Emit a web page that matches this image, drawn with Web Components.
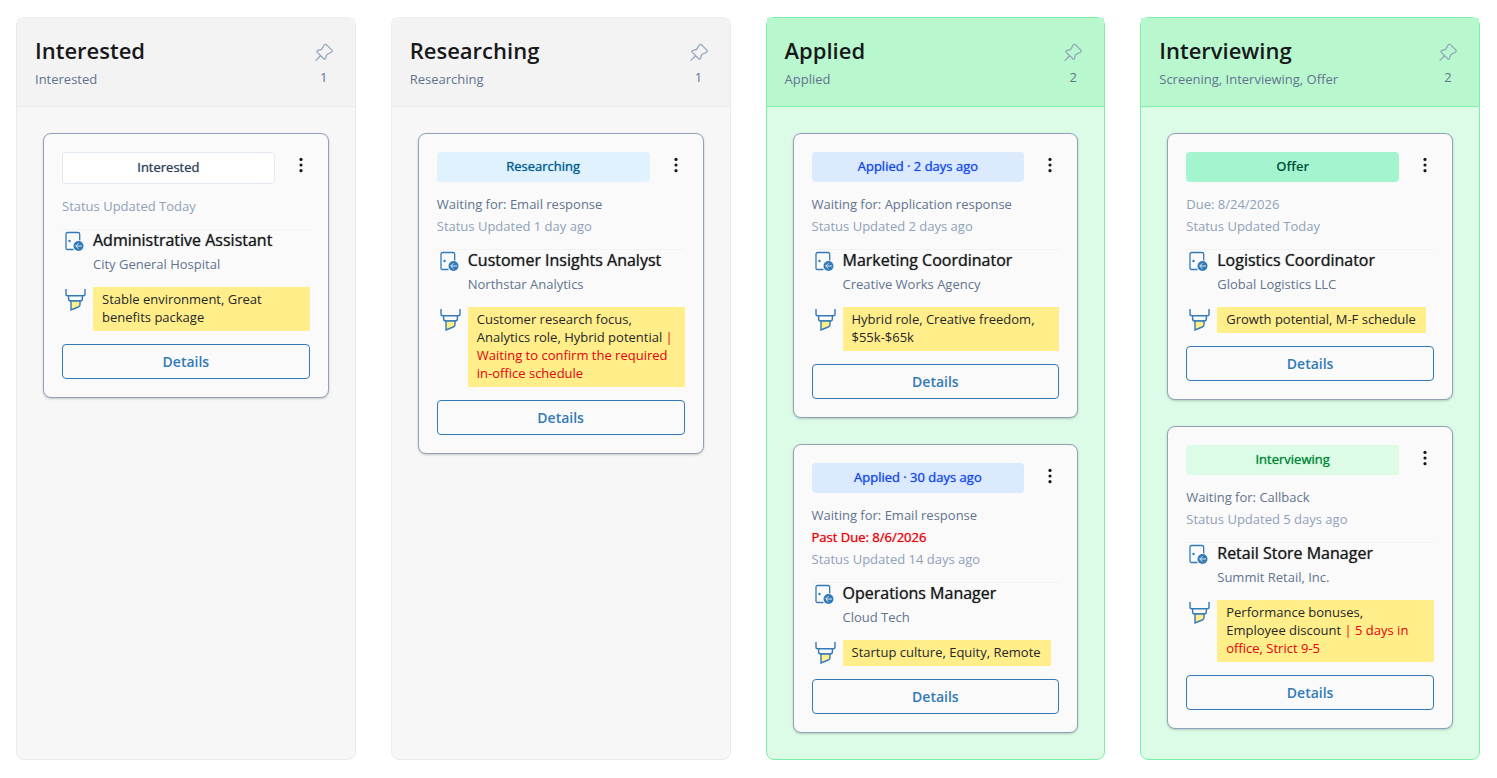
<!DOCTYPE html>
<html lang="en">
<head>
<meta charset="utf-8">
<meta name="viewport" content="width=device-width, initial-scale=1">
<title>Job board</title>
<style>
  body {
    margin: 0;
    background: #fff;
    color: #18181b;
    font-family: "Open Sans", sans-serif;
    font-size: 13px;
    line-height: 18px;
  }
</style>
</head>
<body>
<job-board>
  <job-column heading="Interested" stages="Interested" count="1">
    <job-card status="Interested" tone="plain" role-name="Administrative Assistant" company="City General Hospital">
      <span slot="updated">Status Updated Today</span>
      <span slot="pros">Stable environment, Great benefits package</span>
    </job-card>
  </job-column>
  <job-column heading="Researching" stages="Researching" count="1">
    <job-card status="Researching" tone="sky" role-name="Customer Insights Analyst" company="Northstar Analytics">
      <span slot="waiting">Waiting for: Email response</span>
      <span slot="updated">Status Updated 1 day ago</span>
      <span slot="pros">Customer research focus, Analytics role, Hybrid potential</span>
      <span slot="cons">| Waiting to confirm the required in-office schedule</span>
    </job-card>
  </job-column>
  <job-column heading="Applied" stages="Applied" count="2" active>
    <job-card status="Applied · 2 days ago" tone="blue" role-name="Marketing Coordinator" company="Creative Works Agency">
      <span slot="waiting">Waiting for: Application response</span>
      <span slot="updated">Status Updated 2 days ago</span>
      <span slot="pros">Hybrid role, Creative freedom, $55k-$65k</span>
    </job-card>
    <job-card status="Applied · 30 days ago" tone="blue" role-name="Operations Manager" company="Cloud Tech">
      <span slot="waiting">Waiting for: Email response</span>
      <span slot="overdue">Past Due: 8/6/2026</span>
      <span slot="updated">Status Updated 14 days ago</span>
      <span slot="pros">Startup culture, Equity, Remote</span>
    </job-card>
  </job-column>
  <job-column heading="Interviewing" stages="Screening, Interviewing, Offer" count="2" active>
    <job-card status="Offer" tone="emerald" role-name="Logistics Coordinator" company="Global Logistics LLC">
      <span slot="updated">Due: 8/24/2026</span>
      <span slot="updated">Status Updated Today</span>
      <span slot="pros">Growth potential, M-F schedule</span>
    </job-card>
    <job-card status="Interviewing" tone="green" role-name="Retail Store Manager" company="Summit Retail, Inc.">
      <span slot="waiting">Waiting for: Callback</span>
      <span slot="updated">Status Updated 5 days ago</span>
      <span slot="pros">Performance bonuses, Employee discount</span>
      <span slot="cons">| 5 days in office, Strict 9-5</span>
    </job-card>
  </job-column>
</job-board>

<template id="board-template">
  <style>
    :host {
      display: grid;
      grid-template-columns: repeat(4, minmax(0, 1fr));
      gap: 35px;
      padding: 17px 17px 18px 16px;
    }
  </style>
  <slot></slot>
</template>

<template id="column-template">
  <style>
    :host {
      --edge: #ebebeb;
      --head: #f3f3f3;
      display: block;
      box-sizing: border-box;
      border: 1px solid var(--edge);
      border-radius: 8px;
      background: #f7f7f7;
    }
    :host([active]) {
      --edge: #7bf1a8;
      --head: #b9f8cf;
      background: #dcfce7;
    }
    header {
      display: flex;
      justify-content: space-between;
      padding: 17px 18px 16px;
      background: var(--head);
      border-bottom: 1px solid var(--edge);
    }
    h2 {
      margin: 0;
      font-size: 22px;
      font-weight: 600;
      line-height: 30px;
    }
    p { margin: 0; padding-top: 3px; line-height: 22px; }
    p, .count { color: #62748e; }
    .side {
      display: flex;
      flex-direction: column;
      align-items: center;
      width: 26px;
      padding-top: 8px;
      gap: 7px;
    }
    button {
      display: flex;
      padding: 0;
      border: 0;
      background: none;
      color: #90a1b9;
      cursor: pointer;
    }
    .cards {
      display: flex;
      flex-direction: column;
      gap: 26px;
      padding: 26px;
    }
  </style>
  <header>
    <div>
      <h2></h2>
      <p></p>
    </div>
    <div class="side">
      <button type="button" aria-label="Pin column">
        <svg width="18" height="18" viewBox="0 0 18 18" fill="none" stroke="currentColor" stroke-width="1.2" stroke-linecap="round" stroke-linejoin="round">
          <path d="M1 17.3 5.3 13M9.2 2 6.9 5.9Q6.6 6.5 5.9 6.7L2.4 7.7Q1.3 8.2 2.1 9.1L9 16Q9.9 16.7 10.4 15.6L11.5 12.3Q11.7 11.6 12.3 11.3L16.5 9.2Q17.9 8.3 16.9 7.1L11.6 1.8Q10.2.6 9.2 2Z"/>
        </svg>
      </button>
      <span class="count"></span>
    </div>
  </header>
  <div class="cards"><slot></slot></div>
</template>

<template id="card-template">
  <style>
    :host {
      display: block;
      padding: 18px;
      border: 1px solid #90a1b9;
      border-radius: 8px;
      background: #fafafa;
      box-shadow: 0 1px 3px rgb(0 0 0 / 10%), 0 1px 2px rgb(0 0 0 / 10%);
    }
    .top { display: flex; gap: 17px; align-items: flex-start; }
    .badge {
      flex: 1;
      padding: 5px 6px 7px;
      border-radius: 4px;
      text-align: center;
    }
    /* Medium weight: the regular face with a soft edge of its own colour. */
    .badge, h3, slot[name="overdue"] {
      font-weight: 400;
      text-shadow: 0 0 1px color-mix(in srgb, currentColor 70%, transparent);
    }
    .plain { background: #fff; color: #314158; border: 1px solid #e2e8f0; }
    .sky { background: #dff2fe; color: #00598a; }
    .blue { background: #dbeafe; color: #1447e6; }
    .emerald { background: #a4f4cf; color: #004f3b; font-weight: 600; text-shadow: none; }
    .green { background: #dcfce7; color: #008236; }
    .menu {
      display: flex;
      padding: 4px 0;
      border: 0;
      background: none;
      color: #18181b;
      cursor: pointer;
    }
    .status {
      display: flex;
      flex-direction: column;
      padding: 11px 0 12px;
      border-bottom: 1px solid #f2f2f3;
      line-height: 22px;
    }
    slot[name="waiting"] { color: #62748e; }
    slot[name="updated"] { color: #90a1b9; }
    slot[name="overdue"] { color: #e7000b; }
    .status slot { display: flex; flex-direction: column; }
    .row {
      display: grid;
      grid-template-columns: 31px minmax(0, 1fr);
      align-items: start;
      color: #337ab7;
    }
    .row svg { margin-left: 3px; }
    .job { padding-bottom: 11px; }
    .job svg { margin-top: 1px; }
    h3 { margin: 0; color: #18181b; font-size: 16px; line-height: 20px; }
    .company { margin: 0; padding-top: 2px; color: #62748e; line-height: 24px; }
    .note {
      justify-self: start;
      padding: 3px 10px 5px 9px;
      background: #ffee8a;
      color: #27272a;
    }
    slot[name="cons"] { color: #e7000b; }
    .details {
      display: block;
      width: 100%;
      margin-top: 13px;
      padding: 7px;
      border: 1px solid #337ab7;
      border-radius: 4px;
      background: none;
      color: #337ab7;
      font: 600 14px/19px "Open Sans", sans-serif;
      cursor: pointer;
    }
  </style>
  <div class="top">
    <div class="badge"></div>
    <button type="button" class="menu" aria-label="More actions">
      <svg width="18" height="18" viewBox="0 0 16 16" fill="currentColor">
        <circle cx="8" cy="3" r="1.4"/><circle cx="8" cy="8" r="1.4"/><circle cx="8" cy="13" r="1.4"/>
      </svg>
    </button>
  </div>
  <div class="status">
    <slot name="waiting"></slot>
    <slot name="overdue"></slot>
    <slot name="updated"></slot>
  </div>
  <div class="row job">
    <svg width="19" height="20" viewBox="0 0 19 20" fill="none" stroke="currentColor">
      <path d="M8.5 18.5H2.5Q1 18.5 1 17V3Q1 1.5 2.5 1.5H13Q14.7 1.5 14.7 3.2V9.5" stroke-width="1.3"/>
      <circle cx="4.5" cy="10" r="1.2" fill="currentColor" stroke="none"/>
      <circle cx="13.5" cy="15" r="5" fill="currentColor" stroke="none"/>
      <path d="M17 15H10.8M13.4 12.3 10.7 15 13.4 17.7" stroke="#d9e8f5" stroke-width="1"/>
    </svg>
    <div>
      <h3></h3>
      <p class="company"></p>
    </div>
  </div>
  <div class="row">
    <svg width="21" height="24" viewBox="0 0 21 24" fill="none" stroke="currentColor" stroke-width="1.4">
      <path d="M1 2V7Q1 8.8 2.8 8.8H18.2Q20 8.8 20 7V2M3.6 8.8V11.5Q3.6 14 5.6 14H15.4Q17.4 14 17.4 11.5V8.8"/>
      <path d="M6 14V23L13.2 20Q15 19.2 15 17.4V14Z" fill="#ffee8a"/>
    </svg>
    <div class="note"><slot name="pros"></slot> <slot name="cons"></slot></div>
  </div>
  <button type="button" class="details">Details</button>
</template>

<script>
  class BoardElement extends HTMLElement {
    constructor() {
      super();
      const template = document.getElementById(this.constructor.template);
      this.attachShadow({ mode: "open" }).append(template.content.cloneNode(true));
    }
    fill(selector, attribute) {
      this.shadowRoot.querySelector(selector).textContent = this.getAttribute(attribute);
    }
  }

  class JobBoard extends BoardElement {
    static template = "board-template";
  }

  class JobColumn extends BoardElement {
    static template = "column-template";
    connectedCallback() {
      this.fill("h2", "heading");
      this.fill("p", "stages");
      this.fill(".count", "count");
    }
  }

  class JobCard extends BoardElement {
    static template = "card-template";
    connectedCallback() {
      this.fill(".badge", "status");
      this.fill("h3", "role-name");
      this.fill(".company", "company");
      this.shadowRoot.querySelector(".badge").classList.add(this.getAttribute("tone"));
    }
  }

  customElements.define("job-board", JobBoard);
  customElements.define("job-column", JobColumn);
  customElements.define("job-card", JobCard);
</script>
</body>
</html>
